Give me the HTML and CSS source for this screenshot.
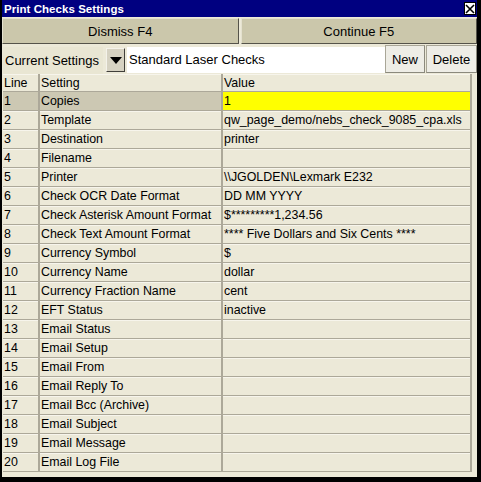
FILE: index.html
```html
<!DOCTYPE html>
<html>
<head>
<meta charset="utf-8">
<link rel="stylesheet" href="styles.css">
</head>
<body>
<div class="win">
  <div class="title">
    <span class="title-text">Print Checks Settings</span>
    <span class="close"><svg width="10" height="10" viewBox="0 0 10 10"><path d="M1 1 L9 9 M9 1 L1 9" stroke="#000" stroke-width="1.6" fill="none"/></svg></span>
  </div>
  <div class="actions">
    <div class="btn big">Dismiss F4</div>
    <div class="btn big">Continue F5</div>
  </div>
  <div class="toolbar">
    <div class="label">Current Settings</div>
    <div class="drop"><svg width="12" height="7" viewBox="0 0 12 7"><path d="M0 0 H12 L6 7 Z" fill="#000"/></svg></div>
    <div class="field">Standard Laser Checks</div>
    <div class="btn small new">New</div>
    <div class="btn small del">Delete</div>
  </div>
  <div class="grid">
    <div class="h">Line</div><div class="h">Setting</div><div class="h">Value</div>
    <div class="c sel">1</div><div class="c sel">Copies</div><div class="c yel">1</div>
    <div class="c">2</div><div class="c">Template</div><div class="c">qw_page_demo/nebs_check_9085_cpa.xls</div>
    <div class="c">3</div><div class="c">Destination</div><div class="c">printer</div>
    <div class="c">4</div><div class="c">Filename</div><div class="c"></div>
    <div class="c">5</div><div class="c">Printer</div><div class="c">\\JGOLDEN\Lexmark E232</div>
    <div class="c">6</div><div class="c">Check OCR Date Format</div><div class="c">DD MM YYYY</div>
    <div class="c">7</div><div class="c">Check Asterisk Amount Format</div><div class="c">$*********1,234.56</div>
    <div class="c">8</div><div class="c">Check Text Amount Format</div><div class="c">**** Five Dollars and Six Cents ****</div>
    <div class="c">9</div><div class="c">Currency Symbol</div><div class="c">$</div>
    <div class="c">10</div><div class="c">Currency Name</div><div class="c">dollar</div>
    <div class="c">11</div><div class="c">Currency Fraction Name</div><div class="c">cent</div>
    <div class="c">12</div><div class="c">EFT Status</div><div class="c">inactive</div>
    <div class="c">13</div><div class="c">Email Status</div><div class="c"></div>
    <div class="c">14</div><div class="c">Email Setup</div><div class="c"></div>
    <div class="c">15</div><div class="c">Email From</div><div class="c"></div>
    <div class="c">16</div><div class="c">Email Reply To</div><div class="c"></div>
    <div class="c">17</div><div class="c">Email Bcc (Archive)</div><div class="c"></div>
    <div class="c">18</div><div class="c">Email Subject</div><div class="c"></div>
    <div class="c">19</div><div class="c">Email Message</div><div class="c"></div>
    <div class="c">20</div><div class="c">Email Log File</div><div class="c"></div>
  </div>
</div>
</body>
</html>
```
FILE: styles.css
```css
html, body {
  margin: 0;
  padding: 0;
  background: #000;
}
body {
  width: 481px;
  height: 482px;
  overflow: hidden;
  font-family: "Liberation Sans", Arial, sans-serif;
  color: #000;
}
.win {
  margin-left: 2px;
  width: 475px;
  height: 477px;
  background: #ece9d8;
  display: flex;
  flex-direction: column;
}
.title {
  height: 17px;
  background: #000080;
  display: flex;
  align-items: center;
  justify-content: space-between;
  padding: 0 1px 0 2px;
  box-sizing: border-box;
}
.title-text {
  color: #fff;
  font-weight: bold;
  font-size: 11.5px;
  letter-spacing: 0.05px;
}
.close {
  width: 12px;
  height: 13px;
  background: #fff;
  box-sizing: border-box;
  border: 1px solid #000;
  display: flex;
  align-items: center;
  justify-content: center;
}
.actions {
  display: flex;
  gap: 2px;
  margin-top: 1px;
  height: 26px;
}
.btn {
  display: flex;
  align-items: center;
  justify-content: center;
  box-sizing: border-box;
  font-size: 13px;
}
.big {
  flex: 1;
  background: #cbc7ab;
  border-top: 1px solid #e4e1cf;
  border-left: 1px solid #e4e1cf;
  border-right: 1px solid #55534a;
  border-bottom: 1px solid #55534a;
}
.toolbar {
  display: flex;
  align-items: flex-start;
  height: 30px;
  padding-left: 1px;
}
.label {
  width: 100px;
  height: 27px;
  margin-top: 3px;
  font-size: 13px;
  line-height: 27px;
  padding-left: 2px;
  box-sizing: border-box;
  background: #e9e6d3;
}
.drop {
  width: 19px;
  height: 24px;
  margin: 4px 0 0 3px;
  box-sizing: border-box;
  background: #d6d2c2;
  border-top: 1px solid #f4f2ea;
  border-left: 1px solid #f4f2ea;
  border-right: 1px solid #403f3a;
  border-bottom: 1px solid #403f3a;
  display: flex;
  align-items: center;
  justify-content: center;
}
.field {
  width: 258px;
  height: 26px;
  margin: 3px 0 0 2px;
  background: #fff;
  font-size: 13px;
  line-height: 26px;
  padding-left: 2px;
  box-sizing: border-box;
}
.small {
  height: 28px;
  margin-top: 1px;
  background: #eeede6;
  border: 1px solid #a9a697;
  border-right-color: #8b897d;
  border-bottom-color: #8b897d;
}
.new {
  width: 40px;
}
.del {
  width: 51px;
  margin-left: 1px;
}
.grid {
  display: grid;
  grid-template-columns: 37px 183px 249px;
  grid-auto-rows: 19px;
  grid-template-rows: 18px;
  margin-left: 1px;
  font-size: 12.4px;
}
.h, .c {
  box-sizing: border-box;
  border-right: 2px solid #aca899;
  border-bottom: 1px solid #aca899;
  padding-left: 1px;
  white-space: nowrap;
  overflow: hidden;
  box-shadow: inset 0 1px 0 #f7f5ec;
}
.h {
  padding-top: 1px;
  line-height: 16px;
  background: #ece9d8;
}
.c {
  padding-top: 1px;
  line-height: 17px;
  background: #ece9d8;
}
.sel {
  background: #ccc8b3;
  box-shadow: none;
}
.yel {
  background: #ffff00;
  box-shadow: none;
}
```
